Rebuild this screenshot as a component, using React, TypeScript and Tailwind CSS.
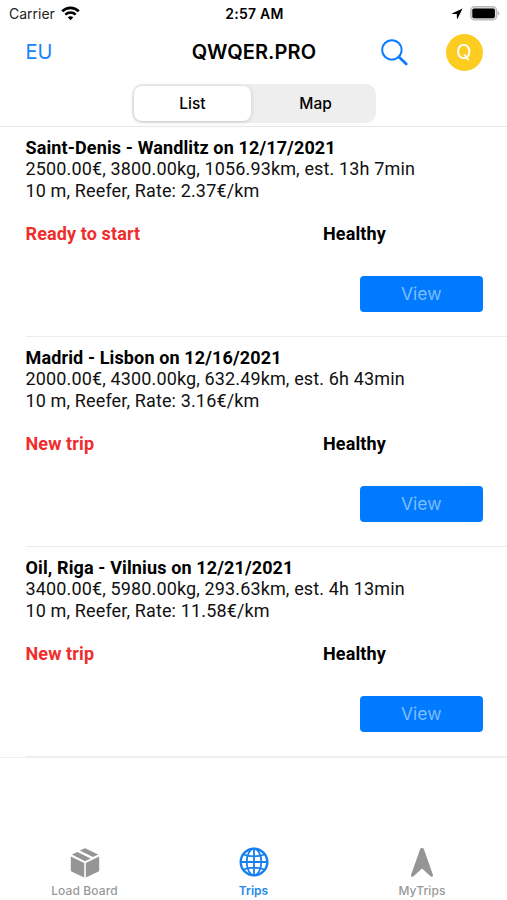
import React from 'react';

interface Trip {
  id: number;
  title: string;
  details: string;
  rate: string;
  status: string;
  health: string;
}

const trips: Trip[] = [
  {
    id: 1,
    title: 'Saint-Denis - Wandlitz on 12/17/2021',
    details: '2500.00€, 3800.00kg, 1056.93km, est. 13h 7min',
    rate: '10 m, Reefer, Rate: 2.37€/km',
    status: 'Ready to start',
    health: 'Healthy',
  },
  {
    id: 2,
    title: 'Madrid - Lisbon on 12/16/2021',
    details: '2000.00€, 4300.00kg, 632.49km, est. 6h 43min',
    rate: '10 m, Reefer, Rate: 3.16€/km',
    status: 'New trip',
    health: 'Healthy',
  },
  {
    id: 3,
    title: 'Oil, Riga - Vilnius on 12/21/2021',
    details: '3400.00€, 5980.00kg, 293.63km, est. 4h 13min',
    rate: '10 m, Reefer, Rate: 11.58€/km',
    status: 'New trip',
    health: 'Healthy',
  },
];

const WifiIcon = () => (
  <svg width="19" height="15" viewBox="0 0 19 15" fill="none" stroke="#000" strokeWidth="2.6">
    <path d="M1.2 5.3C6 .7 13 .7 17.8 5.3" />
    <path d="M4.3 8.6c3-2.8 7.4-2.8 10.4 0" />
    <path d="M9.5 14.2 6.7 11.3c1.6-1.5 4-1.5 5.6 0z" fill="#000" stroke="none" />
  </svg>
);

const LocationIcon = () => (
  <svg width="11" height="11" viewBox="0 0 11 11" fill="#000">
    <path d="M10.6.4.4 5.2c-.5.3-.3.8.2.8h4.2l.1 4.3c0 .5.6.6.8.2z" />
  </svg>
);

const BatteryIcon = () => (
  <svg width="30" height="15" viewBox="0 0 30 15">
    <rect x=".7" y=".7" width="26" height="13.2" rx="4" fill="#ddd" stroke="#b8b8b8" strokeWidth="1.3" />
    <rect x="2.3" y="2.4" width="22.6" height="9.8" rx="1.8" fill="#000" />
    <path d="M27.8 5c2 .8 2 3.8 0 4.6z" fill="#b0b0b0" />
  </svg>
);

const SearchIcon = () => (
  <svg width="27" height="27" viewBox="0 0 27 27" fill="none" stroke="#087cff">
    <circle cx="10.9" cy="10.9" r="9.7" strokeWidth="1.9" />
    <path d="m18 18 7.2 7" strokeWidth="2.7" strokeLinecap="round" />
  </svg>
);

const BoxIcon = () => (
  <svg width="30" height="31" viewBox="0 0 30 31" fill="#959595">
    <path d="M.8 9.6 14.2 16v14.4L2 24.7c-.8-.4-1.200-.9-1.200-1.800z" />
    <path d="M29.200 9.600 15.800 16v14.400L28 24.700c.8-.4 1.200-.9 1.200-1.800z" />
    <path d="m1.900 7.600 5.400-2.700L20.700 11.400 15 14.200z" />
    <path d="m9.800 3.500 4.400-2.100c.5-.2 1-.2 1.500 0l12.500 6.100-5.200 2.500z" />
  </svg>
);

const GlobeIcon = () => (
  <svg width="30" height="30" viewBox="0 0 30 30" fill="none" stroke="#187fee" strokeWidth="1.8">
    <circle cx="15" cy="15" r="13.3" strokeWidth="2.4" />
    <ellipse cx="15" cy="15" rx="7.3" ry="13.3" />
    <path d="M15 1.5v27M1.5 15h27M4.4 7.5c6 2.4 15.2 2.4 21.2 0M4.4 22.5c6-2.4 15.2-2.4 21.2 0" />
  </svg>
);

const ArrowIcon = () => (
  <svg width="24" height="31" viewBox="0 0 24 31" fill="#959595">
    <path d="M10.1 2.2c.6-1.700 3.200-1.700 3.800 0l9 25.500c.5 1.700-1.100 2.700-2.400 1.500L12 21.500l-8.500 7.700c-1.300 1.200-2.900.2-2.400-1.500z" />
  </svg>
);

const TripRow: React.FC<{ trip: Trip }> = ({ trip }) => (
  <li className="h-[210px] border-b border-[#ececec] pt-[10px] pr-[24.5px] font-[Roboto,sans-serif] text-[18px] leading-[21.4px]">
    <h2 className="whitespace-nowrap font-bold tracking-[0.13px]">{trip.title}</h2>
    <p className="whitespace-nowrap tracking-[0.14px] text-[#111]">{trip.details}</p>
    <p className="whitespace-nowrap tracking-[0.14px] text-[#111]">{trip.rate}</p>
    <div className="mt-[21.5px] grid grid-cols-[297.5px_1fr] font-bold tracking-[0.12px]">
      <span className="text-[#f02d2d]">{trip.status}</span>
      <span>{trip.health}</span>
    </div>
    <div className="mt-[31.4px] flex justify-end">
      <button className="h-[36.5px] w-[122.5px] rounded-[4px] bg-[#007aff] font-[Inter,sans-serif] text-[17.5px] text-[#7fbcff]">
        View
      </button>
    </div>
  </li>
);

const App: React.FC = () => {
  return (
    <div className="flex h-screen w-full flex-col overflow-hidden bg-white font-[Inter,sans-serif] text-black">
      <div className="grid h-[27px] shrink-0 grid-cols-[1fr_auto_1fr] items-center pr-[7px] pl-[9px]">
        <div className="flex items-center gap-[6px] text-[14px] text-[#222]">
          <span>Carrier</span>
          <WifiIcon />
        </div>
        <span className="text-center text-[14px] font-semibold tracking-[0.25px]">2:57 AM</span>
        <div className="flex items-center justify-end gap-[7px]">
          <LocationIcon />
          <BatteryIcon />
        </div>
      </div>

      <header className="grid h-[50px] shrink-0 grid-cols-[1fr_auto_1fr] items-center pr-[24.5px] pl-[25.5px]">
        <span className="text-[20px] text-[#1684ff]">EU</span>
        <h1 className="text-[20px] font-semibold tracking-[0.1px]">QWQER.PRO</h1>
        <div className="flex items-center justify-end gap-[38px]">
          <SearchIcon />
          <span className="flex h-[37px] w-[37px] items-center justify-center rounded-full bg-[#fccc20] text-[20px] text-white">
            Q
          </span>
        </div>
      </header>

      <div className="flex h-[50px] shrink-0 justify-center border-b border-[#e8e8e8] pt-[7px] pl-px">
        <div className="grid h-[39px] w-[244px] grid-cols-2 rounded-[10px] bg-[#eeeeef] p-[2px] text-[15.5px] font-medium">
          <button className="mr-[3px] rounded-[8px] bg-white shadow-[0_1px_4px_rgba(0,0,0,0.16)]">List</button>
          <button className="pl-[3px]">Map</button>
        </div>
      </div>

      <div className="border-b border-[#f0f0f0]">
        <ul className="ml-[25.5px]">
          {trips.map((trip) => (
            <TripRow key={trip.id} trip={trip} />
          ))}
        </ul>
      </div>

      <nav className="mt-auto grid h-[53px] shrink-0 grid-cols-3 text-[12px] font-medium text-[#999]">
        <div className="flex flex-col items-center">
          <BoxIcon />
          <span className="mt-[4px] tracking-[0.12px]">Load Board</span>
        </div>
        <div className="flex flex-col items-center text-[#2589ee]">
          <GlobeIcon />
          <span className="mt-[5px] font-semibold">Trips</span>
        </div>
        <div className="flex flex-col items-center pr-px">
          <ArrowIcon />
          <span className="mt-[4px] tracking-[0.1px]">MyTrips</span>
        </div>
      </nav>
    </div>
  );
};

export default App;
